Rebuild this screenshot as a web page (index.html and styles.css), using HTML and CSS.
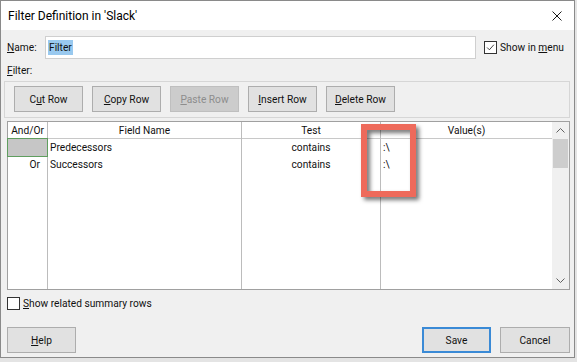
FILE: index.html
```html
<!DOCTYPE html>
<html lang="en">
<head>
  <meta charset="UTF-8">
  <title>Filter Definition in 'Slack'</title>
  <link rel="stylesheet" href="styles.css">
</head>
<body>
  <div class="dialog">
    <!-- Title bar -->
    <div class="titlebar">
      <span class="title">Filter Definition in 'Slack'</span>
      <svg class="close-icon" viewBox="0 0 10 10" fill="none" stroke="currentColor" stroke-width="1">
        <path d="M0.5 0.5 L9.5 9.5 M9.5 0.5 L0.5 9.5" />
      </svg>
    </div>

    <div class="dialog-body">
      <!-- Name -->
      <div class="name-row">
        <label class="name-label" for="name"><u>N</u>ame:</label>
        <div class="name-input" id="name"><span class="selected-text">Filter</span></div>
        <div class="check-field">
          <span class="checkbox checked">
            <svg viewBox="0 0 13 13" fill="none" stroke="currentColor" stroke-width="1">
              <path d="M2.5 6.5 L5.2 9.2 L10.5 3.2" />
            </svg>
          </span>
          <span>Show in <u>m</u>enu</span>
        </div>
      </div>

      <div class="filter-label"><u>F</u>ilter:</div>

      <!-- Row toolbar -->
      <div class="toolbar">
        <button class="btn">C<u>u</u>t Row</button>
        <button class="btn"><u>C</u>opy Row</button>
        <button class="btn" disabled><u>P</u>aste Row</button>
        <button class="btn"><u>I</u>nsert Row</button>
        <button class="btn"><u>D</u>elete Row</button>
      </div>

      <!-- Criteria grid -->
      <div class="grid">
        <div class="col col-andor">
          <div class="head">And/Or</div>
          <div class="cell sel"></div>
          <div class="cell right">Or</div>
        </div>
        <div class="col col-field">
          <div class="head">Field Name</div>
          <div class="cell">Predecessors</div>
          <div class="cell">Successors</div>
        </div>
        <div class="col col-test">
          <div class="head">Test</div>
          <div class="cell center">contains</div>
          <div class="cell center">contains</div>
        </div>
        <div class="col col-value">
          <div class="head">Value(s)</div>
          <div class="cell">:\</div>
          <div class="cell">:\</div>
        </div>
        <div class="scrollbar">
          <div class="scroll-arrow">
            <svg viewBox="0 0 9 5" fill="none" stroke="currentColor" stroke-width="1"><path d="M0.5 4.5 L4.5 0.5 L8.5 4.5" /></svg>
          </div>
          <div class="scroll-thumb"></div>
          <div class="scroll-track"></div>
          <div class="scroll-arrow">
            <svg viewBox="0 0 9 5" fill="none" stroke="currentColor" stroke-width="1"><path d="M0.5 0.5 L4.5 4.5 L8.5 0.5" /></svg>
          </div>
        </div>

        <div class="callout"></div>
      </div>

      <div class="check-field summary">
        <span class="checkbox"></span>
        <span><u>S</u>how related summary rows</span>
      </div>

      <!-- Footer -->
      <div class="footer">
        <button class="btn"><u>H</u>elp</button>
        <div class="footer-right">
          <button class="btn default">Save</button>
          <button class="btn cancel">Cancel</button>
        </div>
      </div>
    </div>
  </div>
</body>
</html>
```

FILE: styles.css
```css
body {
  margin: 0;
  width: 577px;
  height: 362px;
  background: #e4e4e4;
  font-family: 'Roboto', 'Noto Sans', sans-serif;
  font-size: 10.2px;
  color: #111;
  overflow: hidden;
}

u {
  text-decoration-thickness: 1px;
  text-underline-offset: 1px;
}

/* Dialog frame */
.dialog {
  box-sizing: border-box;
  width: 575px;
  height: 358px;
  border: 1px solid #8a8a8a;
  background: #f0f0f0;
  display: flex;
  flex-direction: column;
}

.titlebar {
  height: 29px;
  background: #fff;
  display: flex;
  align-items: center;
  justify-content: space-between;
  padding: 0 12px 0 7px;
}

.title {
  font-size: 12px;
  color: #000;
}

.close-icon {
  width: 10px;
  height: 10px;
  color: #1a1a1a;
}

.dialog-body {
  flex: 1;
  padding: 6px 4px 0 3px;
  display: flex;
  flex-direction: column;
}

/* Name row */
.name-row {
  display: flex;
  align-items: center;
  height: 23px;
  padding-left: 3px;
  white-space: nowrap;
}

.name-label {
  width: 38px;
  flex: none;
}

.name-input {
  box-sizing: border-box;
  width: 431px;
  flex: none;
  height: 23px;
  border: 1px solid #cfcfcf;
  background: #fff;
  display: flex;
  align-items: center;
  padding-left: 2px;
}

.selected-text {
  background: #99c9ef;
  padding: 0 1px;
  line-height: 15px;
}

.check-field {
  display: flex;
  align-items: center;
  gap: 3px;
  margin-left: 8px;
  white-space: nowrap;
}

.checkbox {
  box-sizing: border-box;
  width: 13px;
  height: 13px;
  flex: none;
  border: 1px solid #333;
  background: #fff;
  display: flex;
}

.checkbox svg {
  width: 11px;
  height: 11px;
  color: #222;
}

.filter-label {
  margin: 4px 0 2px 3px;
  height: 16px;
  line-height: 16px;
}

/* Toolbar */
.toolbar {
  box-sizing: border-box;
  height: 37px;
  border: 1px solid #d6d6d6;
  padding: 4px 0 0 9px;
  display: flex;
  gap: 9px;
}

.btn {
  box-sizing: border-box;
  width: 69px;
  height: 26px;
  padding: 0;
  border: 1px solid #adadad;
  background: #e1e1e1;
  font-family: inherit;
  font-size: 10.2px;
  color: #111;
}

.btn:disabled {
  background: #cccccc;
  border-color: #bfbfbf;
  color: #8d8d8d;
}

/* Grid */
.grid {
  position: relative;
  box-sizing: border-box;
  height: 169px;
  margin: 3px 0 0 3px;
  border: 1px solid #a0a0a0;
  background: #fff;
  display: flex;
}

.col {
  display: flex;
  flex-direction: column;
  border-right: 1px solid #bcbcbc;
}

.col-andor { width: 39px; }
.col-field { width: 193px; }
.col-test { width: 138px; }
.col-value { width: 171px; border-right: none; }

.head {
  height: 16px;
  line-height: 17px;
  border-bottom: 1px solid #c8c8c8;
  text-align: center;
}

.cell {
  height: 17px;
  line-height: 18px;
  padding: 0 2px;
  white-space: nowrap;
}

.cell.right { text-align: right; padding-right: 7px; }
.cell.center { text-align: center; }

.cell.sel {
  background: #c6c6c6;
  box-shadow: 0 0 0 1px #5f9e5f;
}

.scrollbar {
  width: 17px;
  background: #f0f0f0;
  display: flex;
  flex-direction: column;
}

.scroll-arrow {
  height: 17px;
  display: flex;
  align-items: center;
  justify-content: center;
  color: #606060;
}

.scroll-arrow svg {
  width: 9px;
  height: 5px;
}

.scroll-thumb {
  height: 29px;
  margin: 0 1px;
  background: #cdcdcd;
}

.scroll-track { flex: 1; }

/* Red highlight box drawn over the grid */
.callout {
  position: absolute;
  left: 353px;
  top: 2px;
  width: 55px;
  height: 73px;
  box-sizing: border-box;
  border: 6px solid #ee6a5b;
  filter: drop-shadow(3px 3px 2px rgba(0, 0, 0, 0.55));
}

.summary {
  margin: 7px 0 0 3px;
  height: 13px;
}

/* Footer */
.footer {
  display: flex;
  justify-content: space-between;
  margin: 17px 0 0 3px;
}

.footer-right {
  display: flex;
  gap: 9px;
}

.btn.default {
  border: 2px solid #3a8ad6;
}

.btn.cancel {
  width: 70px;
}
```
